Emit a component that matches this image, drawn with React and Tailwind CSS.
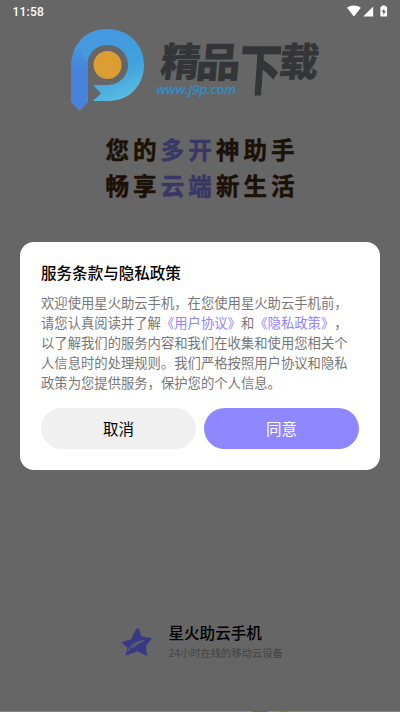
const StatusBar = () => (
  <header className="flex h-6 shrink-0 items-center justify-between pl-[12.5px] pr-[12px] text-white">
    <span className="font-['Roboto',sans-serif] text-[12px] font-medium leading-none tracking-[0.2px]">11:58</span>
    <svg width="42" height="14" viewBox="346 4.500 42 14" fill="currentColor">
      <path d="M347 7.3C350.6 4.3 357.2 4.3 360.8 7.3L353.9 16Z" />
      <path d="M373.2 6V16H363.2Z" />
      <path
        fillRule="evenodd"
        d="M382 5h3.4v1.1h1c.4 0 .7.3.7.7v8.6c0 .4-.3.7-.7.7h-5.3c-.4 0-.7-.3-.7-.7V6.8c0-.4.3-.7.7-.7H382ZM384.3 8l-2.7 3.6h1.7v2.8l2.6-3.9h-1.6Z"
      />
    </svg>
  </header>
);

const Logo = () => (
  <svg
    className="block shrink-0"
    width="400"
    height="90"
    viewBox="0 24 400 90"
    role="img"
    aria-label="精品下载"
  >
    <defs>
      <linearGradient id="ring" x1="95" y1="40" x2="120" y2="101" gradientUnits="userSpaceOnUse">
        <stop offset="0" stopColor="#4599e0" />
        <stop offset="0.55" stopColor="#3fa2dc" />
        <stop offset="1" stopColor="#5bbde0" />
      </linearGradient>
      <linearGradient id="stem" x1="0" y1="45" x2="0" y2="110" gradientUnits="userSpaceOnUse">
        <stop offset="0" stopColor="#4599e0" />
        <stop offset="0.4" stopColor="#4783db" />
        <stop offset="1" stopColor="#4783dc" />
      </linearGradient>
    </defs>
    <path
      d="M71.5 65C71.5 44 86 29 107 29C128 29 144 44 144 65C144 86 129 101 108 101H93L101 93.5L93 85H107C119 85 128 76.5 128 65C128 53.5 119 45 107.5 45C96 45 87.5 53.5 87.5 65V102L79.5 110.5L71.5 102Z"
      fill="url(#ring)"
    />
    <path d="M71.5 65C71.5 57 74 49 78 44L87.5 65V102L79.5 110.5L71.5 102Z" fill="url(#stem)" />
    <circle cx="107.5" cy="65" r="14" fill="#dc9d32" />
    <g
      fill="#343538"
      stroke="#343538"
      strokeWidth="1"
      fontFamily="'Noto Sans CJK SC', sans-serif"
      fontWeight="700"
    >
      <text transform="translate(159.5 76) skewX(-7)" fontSize="39">精</text>
      <text transform="translate(195 77) skewX(-5) scale(1.14 1.04)" fontSize="39">品</text>
      <text transform="translate(238 89.5) skewX(-4) scale(1 1.32)" fontSize="42">下</text>
      <text transform="translate(278 76) skewX(-7)" fontSize="39">载</text>
    </g>
    <text
      x="156.5"
      y="93.5"
      fill="#2c8fc8"
      stroke="#2c8fc8"
      strokeWidth="0.4"
      fontFamily="'Open Sans', sans-serif"
      fontStyle="italic"
      fontSize="12.5"
      textLength="79.5"
      lengthAdjust="spacingAndGlyphs"
    >
      www.j9p.com
    </text>
  </svg>
);

const Slogan = () => (
  <h1 className="mt-[17px] h-[73px] shrink-0 pl-[105.5px] text-[23.5px] font-bold leading-[36px] tracking-[4.1px] text-[#1b1106] [-webkit-text-stroke:0.5px_currentColor]">
    <div>
      您的<span className="text-[#393766]">多开</span>神助手
    </div>
    <div>
      畅享<span className="text-[#393766]">云端</span>新生活
    </div>
  </h1>
);

const ConsentDialog = () => (
  <section className="mx-5 mt-[38px] h-[228px] shrink-0 rounded-[14px] bg-white px-[21px] pt-[19px]">
    <h2 className="text-[15.55px] font-medium leading-[22px] text-black">服务条款与隐私政策</h2>
    <p className="mt-[10px] whitespace-nowrap text-[13.33px] leading-5 text-[#777] [text-spacing-trim:space-all]">
      欢迎使用星火助云手机，在您使用星火助云手机前，
      <br />
      请您认真阅读并了解<a className="text-[#8f84ff]">《用户协议》</a>和<a className="text-[#8f84ff]">《隐私政策》</a>，
      <br />
      以了解我们的服务内容和我们在收集和使用您相关个
      <br />
      人信息时的处理规则。我们严格按照用户协议和隐私
      <br />
      政策为您提供服务，保护您的个人信息。
    </p>
    <div className="mt-[15px] flex gap-2 text-[15.5px]">
      <button className="h-[41px] w-[155px] rounded-full bg-[#f0f0f0] text-black">取消</button>
      <button className="h-[41px] w-[155px] rounded-full bg-[#8f87ff] text-white">同意</button>
    </div>
  </section>
);

const Brand = () => (
  <footer className="mt-auto flex shrink-0 items-center pb-[49px] pl-[118.5px]">
    <svg width="34" height="34" viewBox="118 624 34 34">
      <path
        d="M134.6 629Q136.7 625.5 138.4 629L140.3 635.3L151 637.3L144.8 645L146.2 655L136.3 650.2L124.5 654.8L126.6 646.5L120.2 641.2L130 638.4Z"
        fill="#393884"
      />
      <path
        d="M126.5 650.5C130 644 135 640.500 142.500 639.500C138 641.500 134.500 643.500 131.500 647"
        fill="none"
        stroke="#666"
        strokeWidth="1.2"
      />
    </svg>
    <div className="pl-4">
      <div className="text-[15.55px] font-medium leading-[22px] text-black">星火助云手机</div>
      <div className="text-[10.3px] leading-[19px] text-[#434343]">24小时在线的移动云设备</div>
    </div>
  </footer>
);

const BottomEdge = () => (
  <div className="flex h-px shrink-0 bg-[#8b8985]">
    <div className="ml-[252px] h-px w-4 bg-[#5d7238]" />
    <div className="ml-[11px] h-px w-[10px] bg-[#76803c]" />
  </div>
);

export default function App() {
  return (
    <main className="flex h-[712px] w-[400px] flex-col overflow-hidden bg-[#666] font-['Noto_Sans_CJK_SC',sans-serif]">
      <StatusBar />
      <Logo />
      <Slogan />
      <ConsentDialog />
      <Brand />
      <BottomEdge />
    </main>
  );
}
